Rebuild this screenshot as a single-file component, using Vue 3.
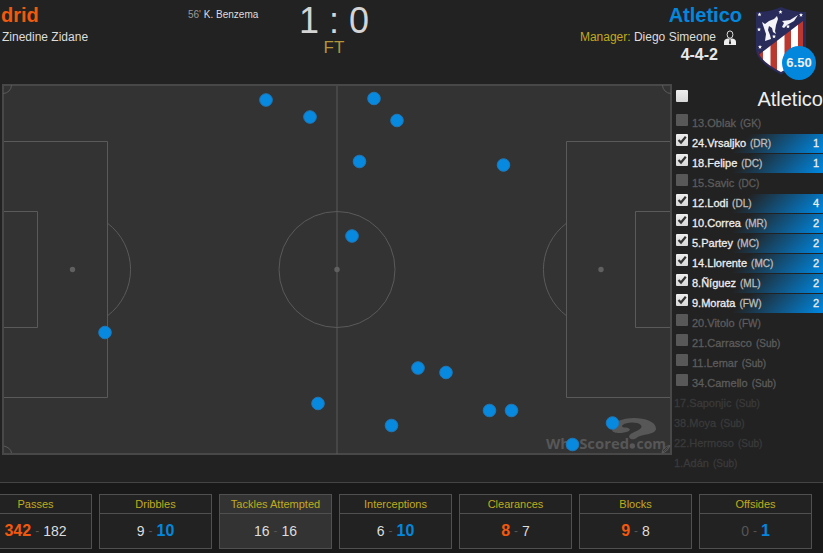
<script setup>
import { computed } from 'vue'

const players = [
  { no: 13, name: 'Oblak', pos: 'GK', count: 0 },
  { no: 24, name: 'Vrsaljko', pos: 'DR', count: 1 },
  { no: 18, name: 'Felipe', pos: 'DC', count: 1 },
  { no: 15, name: 'Savic', pos: 'DC', count: 0 },
  { no: 12, name: 'Lodi', pos: 'DL', count: 4 },
  { no: 10, name: 'Correa', pos: 'MR', count: 2 },
  { no: 5, name: 'Partey', pos: 'MC', count: 2 },
  { no: 14, name: 'Llorente', pos: 'MC', count: 2 },
  { no: 8, name: 'Ñíguez', pos: 'ML', count: 2 },
  { no: 9, name: 'Morata', pos: 'FW', count: 2 },
  { no: 20, name: 'Vitolo', pos: 'FW', count: 0 },
  { no: 21, name: 'Carrasco', pos: 'Sub', count: 0 },
  { no: 11, name: 'Lemar', pos: 'Sub', count: 0 },
  { no: 34, name: 'Camello', pos: 'Sub', count: 0 },
  { no: 17, name: 'Saponjic', pos: 'Sub', unused: true },
  { no: 38, name: 'Moya', pos: 'Sub', unused: true },
  { no: 22, name: 'Hermoso', pos: 'Sub', unused: true },
  { no: 1, name: 'Adán', pos: 'Sub', unused: true }
]

// tackle positions on the pitch
const events = [
  [266, 100], [310, 117], [374, 98.5], [397, 120.5], [359.5, 161.5],
  [503.5, 165], [352, 236], [105, 332.5], [318, 403.5], [391.5, 425.5],
  [418, 368], [446, 372.5], [489.5, 410.5], [511.5, 410.5], [612.5, 423],
  [572.5, 444.5]
]

const stats = [
  { label: 'Passes', home: 342, away: 182 },
  { label: 'Dribbles', home: 9, away: 10 },
  { label: 'Tackles Attempted', home: 16, away: 16, selected: true },
  { label: 'Interceptions', home: 6, away: 10 },
  { label: 'Clearances', home: 8, away: 7 },
  { label: 'Blocks', home: 9, away: 8 },
  { label: 'Offsides', home: 0, away: 1 }
]

const rows = computed(() => players.map(p => ({
  ...p,
  state: p.unused ? 'unused' : p.count ? 'active' : 'idle'
})))
</script>

<template>
  <div class="match">
    <header class="match-header">
      <div class="home">
        <div class="team-name">drid</div>
        <div class="manager">Zinedine Zidane</div>
      </div>
      <div class="goals"><span class="minute">56'</span> K. Benzema</div>
      <div class="score">
        <div class="result">1 : 0</div>
        <div class="status">FT</div>
      </div>
      <div class="away">
        <div class="team-name">Atletico</div>
        <div class="manager-row">
          <div>
            <div class="manager"><span class="manager-label">Manager:</span> Diego Simeone</div>
            <div class="formation">4-4-2</div>
          </div>
          <svg class="manager-icon" width="12" height="16" viewBox="0 0 12 16">
            <path d="M0 15V12Q0 9.2 3.5 8.4H8.5Q12 9.2 12 12V15Z" fill="#eee" />
            <ellipse cx="6" cy="4.6" rx="2.9" ry="3.7" fill="#222" stroke="#ddd" stroke-width="1" />
            <path d="M5.2 9.6h1.6l-.3 1.2.6 2.4L6 14.6l-1.1-1.4.6-2.4Z" fill="#222" />
          </svg>
        </div>
      </div>
      <div class="crest">
        <svg width="52" height="68" viewBox="0 0 52 68">
          <defs>
            <clipPath id="shield">
              <path d="M3 8Q16 7 26 3 36 7 48 8V41Q48 53 26 65 5 54 3 44Z" />
            </clipPath>
          </defs>
          <path d="M1 5Q15 5 26 0 37 5 51 5V42Q50 55 26 67.5 1 54 1 43Z" fill="#292b5b" />
          <g clip-path="url(#shield)">
            <path d="M0 45L52 11V68H0Z" fill="#b9382f" />
            <path d="M8 30h7.5v40H8ZM22 20h7.5v50H22ZM36 10h7v50H36Z" fill="#fff" />
            <path d="M0 0H52V11L2 49Z" fill="#292b5b" />
          </g>
          <path d="M7 15L10 17 14 14 19 12 22 9 23 12 21 18 20 24 21 27 18 25 17 21 14 19 13 23 15 28 16 32 10 34 11 27 9 21ZM27 14L35 13 43 8 39 14 32 18 29 21 27 20 29 16Z" fill="#f4f4f8" />
          <g fill="#fff">
            <path v-for="s in [[4.5, 7.5], [25.5, 5], [46, 8], [4, 22.5], [5, 40], [33, 19.5], [19, 29.5]]" :key="s.join()"
              :transform="`translate(${s[0]} ${s[1]})`" d="M0-2L.6-.7 2-.7 .9.3 1.3 1.8 0 .9-1.3 1.8-.9.3-2-.7-.6-.7Z" />
          </g>
        </svg>
        <span class="rating">6.50</span>
      </div>
    </header>

    <main class="match-body">
      <svg class="pitch" width="672" height="372" viewBox="0 84 672 372">
        <rect x="3" y="85" width="668" height="369" fill="#333" stroke="#484848" stroke-width="2" />
        <g class="lines">
          <path d="M337 86V454" />
          <circle cx="337" cy="269.5" r="58" />
          <path d="M4 141.5H107.5V397.5H4M4 211.5H37.5V327.5H4" />
          <path d="M670 141.5H566.5V397.5H670M670 211.5H635.5V327.5H670" />
          <path d="M107.5 223.2A58 58 0 0 1 107.5 315.8M566.5 223.2A58 58 0 0 0 566.5 315.8" />
          <path d="M11.5 85A8.5 8.5 0 0 1 3 93.5M662.5 85A8.5 8.5 0 0 0 671 93.5M4 446Q11 448 11.5 453" />
          <path d="M662 453Q662.5 446.5 670 445.5M662 453L670 445.5M662 453Q667 452.5 670 445.5" />
        </g>
        <g fill="#606060">
          <circle cx="72.5" cy="269.5" r="2.7" />
          <circle cx="337" cy="269.5" r="2.7" />
          <circle cx="601" cy="269.5" r="2.7" />
        </g>
        <g fill="#575757">
          <path d="M612 430C613 434 623 433.5 628 431.5C632 429.5 629 427.5 624 427.5C619 426.5 624 422.5 632 422.5C640 422.5 644 426 640 429C636 432 629 433 629 437C630 440 635 440 637 437.5C641 434 656 435 656 428.5C656 422 645 418 634 418C624 418 618 421 617 422Z" />
          <circle cx="632.3" cy="446" r="2.7" />
          <text class="watermark" x="546" y="448.5" textLength="83" lengthAdjust="spacingAndGlyphs">WhoScored</text>
          <text class="watermark" x="636.5" y="448.5" textLength="29.5" lengthAdjust="spacingAndGlyphs">com</text>
        </g>
        <circle v-for="(e, i) in events" :key="i" :cx="e[0]" :cy="e[1]" r="6.3" class="event" />
      </svg>

      <aside class="squad">
        <div class="squad-title">
          <span class="check"></span>
          <span>Atletico</span>
        </div>
        <div v-for="p in rows" :key="p.no" class="player" :class="p.state">
          <span v-if="!p.unused" class="check">
            <svg v-if="p.count" width="12" height="12" viewBox="0 0 12 12">
              <path d="M2.5 6L5 8.5 9.8 2.8" fill="none" stroke="#333" stroke-width="2.2" />
            </svg>
          </span>
          <span class="player-name">{{ p.no }}.{{ p.name }}</span>
          <span class="position">({{ p.pos }})</span>
          <span v-if="p.count" class="count">{{ p.count }}</span>
        </div>
      </aside>
    </main>

    <section class="stats">
      <div v-for="s in stats" :key="s.label" class="stat" :class="{ selected: s.selected }">
        <div class="stat-label">{{ s.label }}</div>
        <div class="stat-values">
          <span :class="{ 'home-lead': s.home > s.away, zero: !s.home }">{{ s.home }}</span>
          <span class="dash">-</span>
          <span :class="{ 'away-lead': s.away > s.home }">{{ s.away }}</span>
        </div>
      </div>
    </section>
  </div>
</template>

<style>
body {
  margin: 0;
  background: #171717;
}
</style>

<style scoped>
.match {
  width: 823px;
  height: 553px;
  overflow: hidden;
  background: #222;
  color: #ddd;
  font-family: 'Liberation Sans', Arial, sans-serif;
  font-size: 12px;
}

.match-header {
  display: flex;
  height: 84px;
}

.home {
  width: 188px;
  padding: 4px 0 0 1px;
  box-sizing: border-box;
}

.team-name {
  font-size: 20px;
  line-height: 23px;
  font-weight: bold;
}

.home .team-name {
  color: #f1590f;
}

.home .manager {
  margin: 3px 0 0 1px;
}

.manager {
  line-height: 14px;
  white-space: nowrap;
}

.goals {
  width: 102px;
  padding-top: 9px;
  font-size: 10px;
  line-height: 12px;
}

.minute {
  color: #999;
}

.score {
  width: 88px;
  text-align: center;
}

.result {
  font-size: 36px;
  line-height: 38px;
  padding-top: 2px;
  white-space: nowrap;
  color: #d4d4d4;
}

.status {
  margin-top: -2px;
  font-size: 17px;
  line-height: 19px;
  color: #b4953a;
}

.away {
  flex: 1;
  padding-top: 4px;
}

.away .team-name {
  text-align: right;
  color: #0287dd;
}

.manager-row {
  display: flex;
  justify-content: flex-end;
  gap: 8px;
  padding: 3px 6px 0 0;
  text-align: right;
}

.manager-label {
  color: #c0ab1c;
}

.formation {
  margin-right: -2px;
  font-size: 16px;
  line-height: 21px;
  font-weight: bold;
  color: #e8e8e8;
}

.crest {
  position: relative;
  width: 68px;
  margin-left: 13px;
  padding-top: 7px;
}

.rating {
  position: absolute;
  left: 27px;
  top: 46px;
  width: 34px;
  height: 34px;
  border-radius: 50%;
  background: #0287dd;
  color: #eee;
  font-size: 13px;
  line-height: 33px;
  font-weight: bold;
  text-align: center;
}

.match-body {
  display: flex;
  height: 398px;
}

.pitch {
  flex: none;
}

.lines {
  fill: none;
  stroke: #5a5a5a;
  stroke-width: 1;
}

.watermark {
  font-family: 'Open Sans', sans-serif;
  font-size: 15px;
  font-weight: bold;
}

.event {
  fill: #0789e0;
  stroke: #1f77b6;
  stroke-width: 1;
}

.squad {
  flex: 1;
}

.squad-title {
  display: flex;
  justify-content: space-between;
  height: 30px;
  line-height: 30px;
  font-size: 20px;
  color: #eee;
}

.squad-title .check {
  margin-top: 6px;
}

.check {
  display: block;
  flex: none;
  width: 12px;
  height: 12px;
  margin: 0 4px;
  border-radius: 1px;
  background: linear-gradient(#eee, #d8d8d8);
}

.check svg {
  display: block;
}

.player {
  display: flex;
  height: 19px;
  margin-bottom: 1px;
  font-size: 11px;
  line-height: 19px;
  -webkit-text-stroke: 0.3px currentColor;
}

.player .position {
  margin-left: 4px;
  font-size: 10px;
  line-height: 20px;
}

.active {
  color: #eee;
  background: linear-gradient(135deg, rgba(0, 131, 216, 0) 46%, #0083d8 97%);
}

.active .position {
  color: #bbb;
}

.idle {
  color: #5c5c5c;
}

.idle .check {
  background: #585858;
}

.unused {
  padding-left: 2px;
  color: #3a3a3a;
}

.count {
  margin: 0 4px 0 auto;
}

.stats {
  display: flex;
  gap: 7px;
  box-sizing: border-box;
  height: 71px;
  margin-left: -21px;
  padding-top: 11px;
  border-top: 1px solid #444;
  background: #191919;
}

.stat {
  flex: none;
  box-sizing: border-box;
  width: 113px;
  height: 55px;
  border: 1px solid #505050;
  background: #222;
  text-align: center;
}

.stat.selected {
  background: #333;
}

.stat-label {
  height: 18px;
  border-bottom: 1px solid #505050;
  font-size: 11px;
  line-height: 19px;
  color: #c0ab1c;
}

.stat-values {
  display: flex;
  justify-content: center;
  align-items: center;
  gap: 4px;
  height: 34px;
  font-size: 14px;
}

.dash,
.zero {
  color: #555;
}

.dash {
  font-size: 12px;
}

.home-lead,
.away-lead {
  font-size: 16px;
  font-weight: bold;
}

.home-lead {
  color: #f1590f;
}

.away-lead {
  color: #0287dd;
}
</style>
